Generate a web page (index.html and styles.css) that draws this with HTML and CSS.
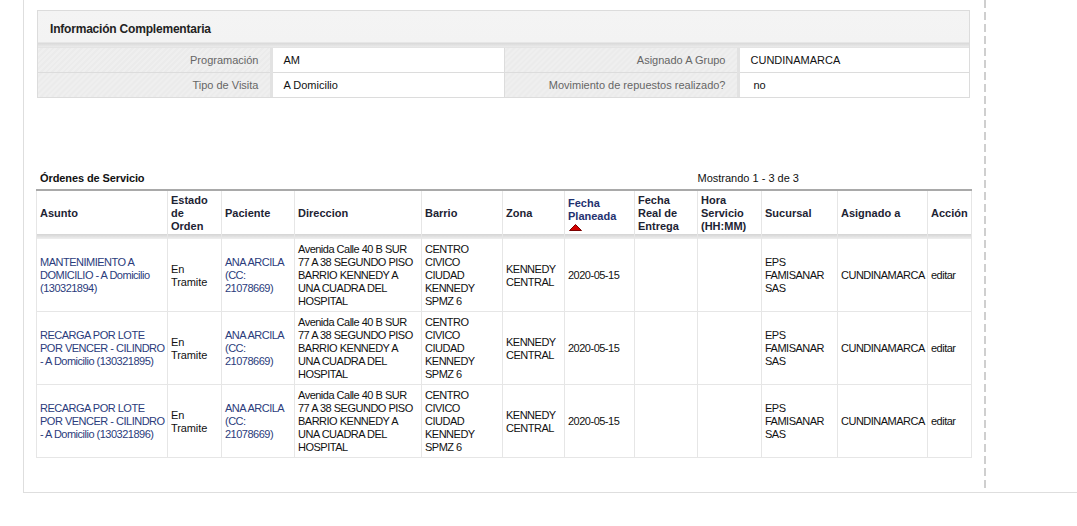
FILE: index.html
```html
<!DOCTYPE html>
<html lang="es">
<head>
<meta charset="utf-8">
<title>Información Complementaria</title>
<link rel="stylesheet" href="styles.css">
</head>
<body>
<div class="page">
  <div class="main">
    <div class="panel">
      <div class="panel-head">Información Complementaria</div>
      <table class="info">
        <colgroup>
          <col style="width:233px"><col style="width:233px"><col style="width:234px"><col style="width:231px">
        </colgroup>
        <tr>
          <td class="lbl">Programación</td>
          <td class="val">AM</td>
          <td class="lbl">Asignado A Grupo</td>
          <td class="val">CUNDINAMARCA</td>
        </tr>
        <tr>
          <td class="lbl">Tipo de Visita</td>
          <td class="val">A Domicilio</td>
          <td class="lbl">Movimiento de repuestos realizado?</td>
          <td class="val val-no">no</td>
        </tr>
      </table>
    </div>

    <div class="orders">
      <div class="orders-head">
        <span class="orders-title">Órdenes de Servicio</span>
        <span class="pager">Mostrando 1 - 3 de 3</span>
      </div>
      <table class="grid">
        <colgroup>
          <col style="width:131px"><col style="width:54px"><col style="width:73px"><col style="width:127px">
          <col style="width:81px"><col style="width:62px"><col style="width:70px"><col style="width:63px">
          <col style="width:64px"><col style="width:76px"><col style="width:90px"><col style="width:44px">
        </colgroup>
        <thead>
          <tr>
            <th>Asunto</th>
            <th>Estado de Orden</th>
            <th>Paciente</th>
            <th>Direccion</th>
            <th>Barrio</th>
            <th>Zona</th>
            <th class="sorted">Fecha Planeada<br><svg class="sort-arrow" width="13" height="7" viewBox="0 0 13 7"><polygon points="6.5,0.5 12.5,6.5 0.5,6.5" fill="#d40000" stroke="#7a0000" stroke-width="1"/></svg></th>
            <th>Fecha Real de Entrega</th>
            <th>Hora Servicio (HH:MM)</th>
            <th>Sucursal</th>
            <th>Asignado a</th>
            <th>Acción</th>
          </tr>
        </thead>
        <tbody>
          <tr>
            <td><a class="lnk">MANTENIMIENTO A DOMICILIO - A Domicilio (130321894)</a></td>
            <td class="estado">En Tramite</td>
            <td><a class="lnk">ANA ARCILA (CC: 21078669)</a></td>
            <td>Avenida Calle 40 B SUR 77 A 38 SEGUNDO PISO BARRIO KENNEDY A UNA CUADRA DEL HOSPITAL</td>
            <td>CENTRO CIVICO CIUDAD KENNEDY SPMZ 6</td>
            <td>KENNEDY CENTRAL</td>
            <td>2020-05-15</td>
            <td></td>
            <td></td>
            <td>EPS FAMISANAR SAS</td>
            <td>CUNDINAMARCA</td>
            <td>editar</td>
          </tr>
          <tr>
            <td><a class="lnk">RECARGA POR LOTE POR VENCER - CILINDRO - A Domicilio (130321895)</a></td>
            <td class="estado">En Tramite</td>
            <td><a class="lnk">ANA ARCILA (CC: 21078669)</a></td>
            <td>Avenida Calle 40 B SUR 77 A 38 SEGUNDO PISO BARRIO KENNEDY A UNA CUADRA DEL HOSPITAL</td>
            <td>CENTRO CIVICO CIUDAD KENNEDY SPMZ 6</td>
            <td>KENNEDY CENTRAL</td>
            <td>2020-05-15</td>
            <td></td>
            <td></td>
            <td>EPS FAMISANAR SAS</td>
            <td>CUNDINAMARCA</td>
            <td>editar</td>
          </tr>
          <tr>
            <td><a class="lnk">RECARGA POR LOTE POR VENCER - CILINDRO - A Domicilio (130321896)</a></td>
            <td class="estado">En Tramite</td>
            <td><a class="lnk">ANA ARCILA (CC: 21078669)</a></td>
            <td>Avenida Calle 40 B SUR 77 A 38 SEGUNDO PISO BARRIO KENNEDY A UNA CUADRA DEL HOSPITAL</td>
            <td>CENTRO CIVICO CIUDAD KENNEDY SPMZ 6</td>
            <td>KENNEDY CENTRAL</td>
            <td>2020-05-15</td>
            <td></td>
            <td></td>
            <td>EPS FAMISANAR SAS</td>
            <td>CUNDINAMARCA</td>
            <td>editar</td>
          </tr>
        </tbody>
      </table>
    </div>
  </div>
  <div class="side"></div>
</div>
</body>
</html>
```

FILE: styles.css
```css
* { box-sizing: border-box; }
html, body { margin: 0; padding: 0; background: #fff; }
body {
  font-family: "Liberation Sans", Arial, sans-serif;
  font-size: 11px;
  color: #222;
}
.page {
  margin-left: 23px;
  height: 493px;
  border-left: 1px solid #dedede;
  border-bottom: 1px solid #dedede;
  display: flex;
}
.main {
  width: 960px;
  padding: 10px 0 0 13px;
}
.side {
  width: 2px;
  background: repeating-linear-gradient(to bottom, #cfcfcf 0, #cfcfcf 8px, transparent 8px, transparent 12px);
}

/* Info panel */
.panel {
  width: 933px;
  border: 1px solid #dcdcdc;
}
.panel-head {
  height: 37px;
  padding: 11px 12px 0;
  font-weight: bold;
  font-size: 12px;
  letter-spacing: -0.2px;
  color: #222;
  background: linear-gradient(to bottom, #f4f4f4 0, #f3f3f3 31px, #d9d9d9 32px, #e6e6e6 35px, #f0f0f0 37px);
  border-bottom: 1px solid #e4e4e4;
}
.info {
  width: 931px;
  border-collapse: collapse;
  table-layout: fixed;
}
.info td {
  height: 25px;
  padding: 0 11px;
  border-top: 1px solid #dcdcdc;
  vertical-align: middle;
}
.info tr:first-child td { border-top: none; height: 24px; }
.info .lbl {
  text-align: right;
  color: #666;
  background: repeating-linear-gradient(135deg, #efefef 0, #efefef 2px, #ebebeb 2px, #ebebeb 4px);
  border-right: 3px solid #e2e2e2;
}
.info .val {
  color: #111;
  background: #fff;
}
.info td:nth-child(3) { border-left: 1px solid #dcdcdc; }
.info .val-no { padding-left: 14px; }

/* Orders */
.orders {
  margin-top: 74px;
  margin-left: -1px;
}
.orders-head {
  display: flex;
  align-items: baseline;
  padding: 0 0 5px 4px;
}
.orders-title {
  font-weight: bold;
  flex: 1;
  color: #111;
  letter-spacing: -0.1px;
}
.pager {
  margin-right: 185px;
  color: #111;
}
.grid {
  width: 935px;
  border-collapse: collapse;
  table-layout: fixed;
  border-top: 2px solid #a9a9a9;
  border-left: 1px solid #e6e6e6;
  border-right: 1px solid #e6e6e6;
  border-bottom: 1px solid #e6e6e6;
}
.grid th {
  text-align: left;
  font-weight: bold;
  color: #1d2333;
  line-height: 13px;
  padding: 3px 4px 6px 3px;
  height: 45px;
  vertical-align: middle;
  border-left: 1px solid #e6e6e6;
  background: linear-gradient(to bottom, #fff 0, #fff calc(100% - 5px), #d4d4d4 calc(100% - 5px), #e4e4e4 calc(100% - 2px), #efefef 100%);
}
.grid th:first-child { border-left: none; }
.grid th.sorted { color: #1f3270; }
.sort-arrow { display: block; margin: 1px 0 0 1px; }
.grid td {
  line-height: 13px;
  letter-spacing: -0.5px;
  padding: 4px 1px 3px 3px;
  height: 73px;
  vertical-align: middle;
  border-left: 1px solid #e6e6e6;
  border-top: 1px solid #e6e6e6;
  color: #111;
}
.grid td.estado { letter-spacing: -0.1px; }
.grid tbody tr:first-child td { border-top: none; height: 72px; }
.grid td:first-child { border-left: none; }
.lnk { color: #2b3c7c; text-decoration: none; }
```
